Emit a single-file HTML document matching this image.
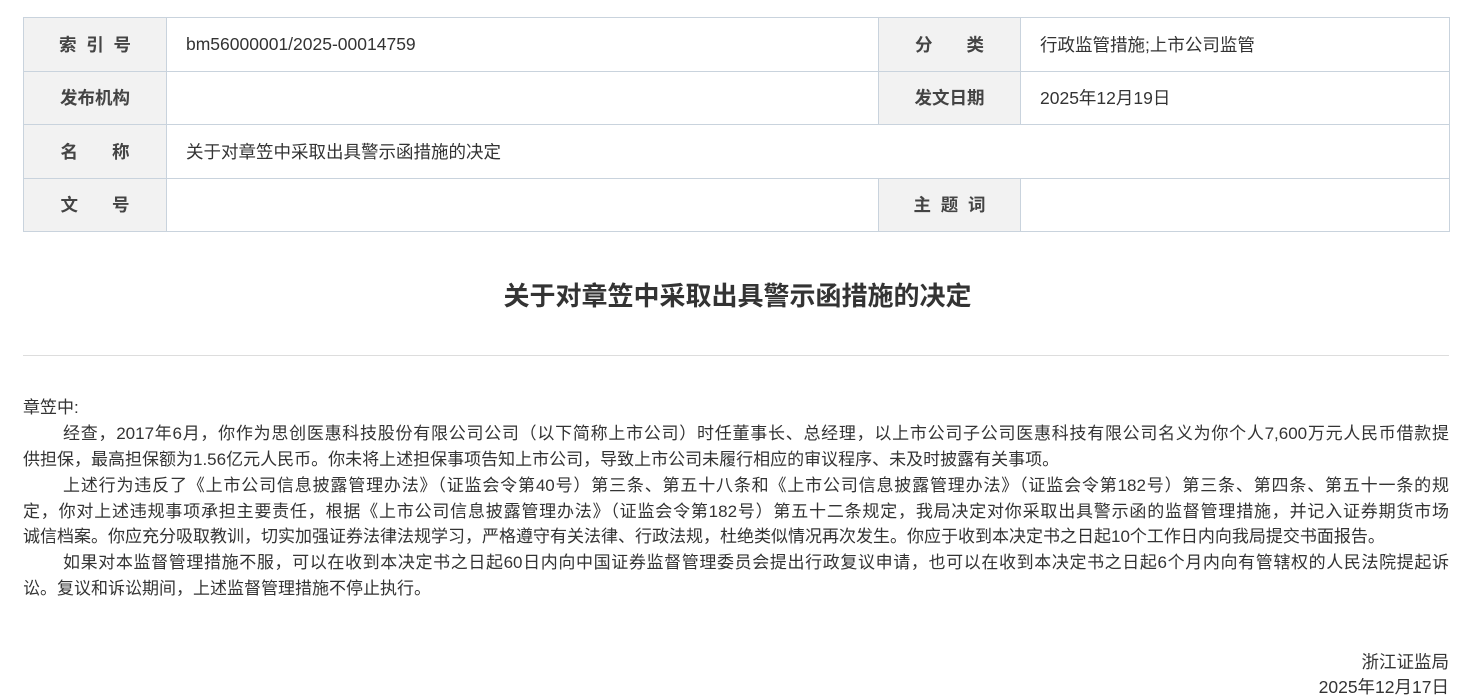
<!DOCTYPE html>
<html><head><meta charset="utf-8"><style>
body{margin:0;background:#fff;font-family:"Liberation Sans","Noto Sans CJK SC",sans-serif;color:#333;font-size:17px;}
table{position:absolute;left:23px;top:17px;width:1426px;border-collapse:collapse;table-layout:fixed;}
td{border:1px solid #c9d3dd;height:52.5px;padding:0;font-size:17.5px;vertical-align:middle;}
td.l{background:#f2f2f2;text-align:center;font-weight:bold;color:#444;}
td.v{padding-left:19px;color:#333;}
h1{position:absolute;left:0;width:1475px;top:276px;margin:0;text-align:center;font-size:26px;font-weight:bold;color:#333;}
.hr{position:absolute;left:23px;width:1426px;top:355px;border-top:1px solid #ddd;}
.body{position:absolute;left:23px;top:395px;width:1426px;line-height:25.9px;color:#333;}
.ln{text-align:justify;text-align-last:justify;white-space:nowrap;height:25.9px;}
.ln.e{text-align-last:left;}
.in{padding-left:40px;}
.sig{position:absolute;right:26px;top:650px;text-align:right;line-height:25px;font-size:17.5px;}
</style></head><body>
<table>
<colgroup><col style="width:143px"><col style="width:712px"><col style="width:142px"><col style="width:429px"></colgroup>
<tr><td class="l">索&nbsp;&nbsp;引&nbsp;&nbsp;号</td><td class="v">bm56000001/2025-00014759</td><td class="l">分&nbsp;&nbsp;&nbsp;&nbsp;&nbsp;&nbsp;&nbsp;类</td><td class="v">行政监管措施;上市公司监管</td></tr>
<tr><td class="l">发布机构</td><td class="v"></td><td class="l">发文日期</td><td class="v">2025年12月19日</td></tr>
<tr><td class="l">名&nbsp;&nbsp;&nbsp;&nbsp;&nbsp;&nbsp;&nbsp;称</td><td class="v" colspan="3">关于对章笠中采取出具警示函措施的决定</td></tr>
<tr><td class="l">文&nbsp;&nbsp;&nbsp;&nbsp;&nbsp;&nbsp;&nbsp;号</td><td class="v"></td><td class="l">主&nbsp;&nbsp;题&nbsp;&nbsp;词</td><td class="v"></td></tr>
</table>
<h1>关于对章笠中采取出具警示函措施的决定</h1>
<div class="hr"></div>
<div class="body">
<div class="ln e">章笠中:</div>
<div class="ln in">经查，2017年6月，你作为思创医惠科技股份有限公司公司（以下简称上市公司）时任董事长、总经理，以上市公司子公司医惠科技有限公司名义为你个人7,600万元人民币借款提</div>
<div class="ln e">供担保，最高担保额为1.56亿元人民币。你未将上述担保事项告知上市公司，导致上市公司未履行相应的审议程序、未及时披露有关事项。</div>
<div class="ln in">上述行为违反了《上市公司信息披露管理办法》（证监会令第40号）第三条、第五十八条和《上市公司信息披露管理办法》（证监会令第182号）第三条、第四条、第五十一条的规</div>
<div class="ln">定，你对上述违规事项承担主要责任，根据《上市公司信息披露管理办法》（证监会令第182号）第五十二条规定，我局决定对你采取出具警示函的监督管理措施，并记入证券期货市场</div>
<div class="ln e">诚信档案。你应充分吸取教训，切实加强证券法律法规学习，严格遵守有关法律、行政法规，杜绝类似情况再次发生。你应于收到本决定书之日起10个工作日内向我局提交书面报告。</div>
<div class="ln in">如果对本监督管理措施不服，可以在收到本决定书之日起60日内向中国证券监督管理委员会提出行政复议申请，也可以在收到本决定书之日起6个月内向有管辖权的人民法院提起诉</div>
<div class="ln e">讼。复议和诉讼期间，上述监督管理措施不停止执行。</div>
</div>
<div class="sig">浙江证监局<br>2025年12月17日</div>
</body></html>
